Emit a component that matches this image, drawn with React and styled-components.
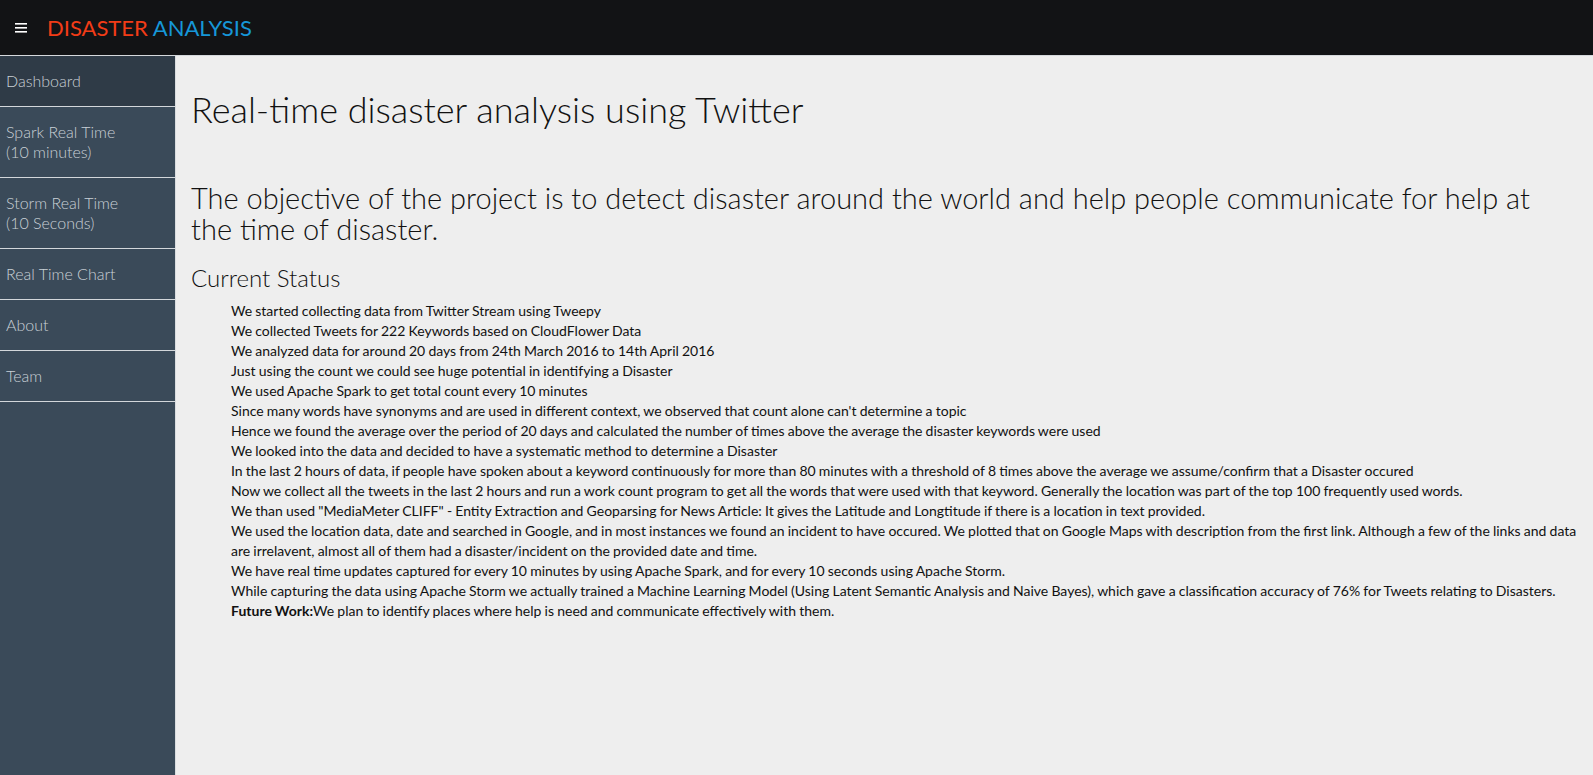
import styled, { createGlobalStyle } from "styled-components";

const GlobalStyle = createGlobalStyle`
  html, body {
    margin: 0;
    padding: 0;
    height: 100%;
  }
  body {
    font-family: Lato, "Open Sans", sans-serif;
    background: #eeeeee;
    color: #111;
  }
  #root {
    min-height: 100%;
  }
`;

const menuItems = [
  { label: "Dashboard", active: true },
  { label: ["Spark Real Time", "(10 minutes)"] },
  { label: ["Storm Real Time", "(10 Seconds)"] },
  { label: "Real Time Chart" },
  { label: "About" },
  { label: "Team" }
];

const statusLines = [
  "We started collecting data from Twitter Stream using Tweepy",
  "We collected Tweets for 222 Keywords based on CloudFlower Data",
  "We analyzed data for around 20 days from 24th March 2016 to 14th April 2016",
  "Just using the count we could see huge potential in identifying a Disaster",
  "We used Apache Spark to get total count every 10 minutes",
  "Since many words have synonyms and are used in different context, we observed that count alone can't determine a topic",
  "Hence we found the average over the period of 20 days and calculated the number of times above the average the disaster keywords were used",
  "We looked into the data and decided to have a systematic method to determine a Disaster",
  "In the last 2 hours of data, if people have spoken about a keyword continuously for more than 80 minutes with a threshold of 8 times above the average we assume/confirm that a Disaster occured",
  "Now we collect all the tweets in the last 2 hours and run a work count program to get all the words that were used with that keyword. Generally the location was part of the top 100 frequently used words.",
  "We than used \"MediaMeter CLIFF\" - Entity Extraction and Geoparsing for News Article: It gives the Latitude and Longtitude if there is a location in text provided.",
  "We used the location data, date and searched in Google, and in most instances we found an incident to have occured. We plotted that on Google Maps with description from the first link. Although a few of the links and data are irrelavent, almost all of them had a disaster/incident on the provided date and time.",
  "We have real time updates captured for every 10 minutes by using Apache Spark, and for every 10 seconds using Apache Storm.",
  "While capturing the data using Apache Storm we actually trained a Machine Learning Model (Using Latent Semantic Analysis and Naive Bayes), which gave a classification accuracy of 76% for Tweets relating to Disasters."
];

function App() {
  return (
    <Page>
      <GlobalStyle />
      <TopBar>
        <MenuButton>
          <svg width="12" height="10" viewBox="0 0 12 10">
            <rect x="0" y="0" width="12" height="1.6" fill="#fff" />
            <rect x="0" y="4" width="12" height="1.6" fill="#fff" />
            <rect x="0" y="8" width="12" height="1.6" fill="#fff" />
          </svg>
        </MenuButton>
        <Brand>
          <BrandWord $color="#f23c17">DISASTER</BrandWord>{" "}
          <BrandWord $color="#1697d8">ANALYSIS</BrandWord>
        </Brand>
      </TopBar>
      <Body>
        <Sidebar>
          {menuItems.map((item, i) => (
            <NavItem key={i} $active={item.active}>
              {Array.isArray(item.label) ? (
                <>
                  {item.label[0]}
                  <br />
                  {item.label[1]}
                </>
              ) : (
                item.label
              )}
            </NavItem>
          ))}
        </Sidebar>
        <Main>
          <Title>Real-time disaster analysis using Twitter</Title>
          <Objective>
            The objective of the project is to detect disaster around the world and help
            people communicate for help at the time of disaster.
          </Objective>
          <SectionTitle>Current Status</SectionTitle>
          <StatusList>
            {statusLines.map((line, i) => (
              <li key={i}>{line}</li>
            ))}
            <li>
              <b>Future Work:</b>We plan to identify places where help is need and communicate
              effectively with them.
            </li>
          </StatusList>
        </Main>
      </Body>
    </Page>
  );
}

export default App;

const Page = styled.div`
  display: flex;
  flex-direction: column;
  min-height: 100vh;
`;

const TopBar = styled.header`
  display: flex;
  align-items: center;
  height: 55px;
  background: #121315;
  border-bottom: 1px solid #d5d8dc;
  padding-left: 15px;
`;

const MenuButton = styled.div`
  display: flex;
  align-items: center;
  width: 12px;
  height: 10px;
  margin-right: 20px;
  margin-top: 1px;
`;

const Brand = styled.div`
  font-family: Lato, sans-serif;
  font-size: 22px;
`;

const BrandWord = styled.span`
  color: ${(p) => p.$color};
`;

const Body = styled.div`
  display: flex;
  flex: 1;
`;

const Sidebar = styled.nav`
  width: 175px;
  flex-shrink: 0;
  background: #3a4a59;
  border-right: 1px solid #d9dcdf;
`;

const NavItem = styled.div`
  padding: 15px 6px;
  font-size: 16px;
  line-height: 20px;
  color: #c9d0d6;
  font-weight: 300;
  background: ${(p) => (p.$active ? "#2f3b47" : "transparent")};
  border-bottom: 1px solid #d3d7db;
`;

const Main = styled.main`
  flex: 1;
  padding: 0 15px;
  background: #eeeeee;
`;

const Title = styled.h1`
  margin: 34px 0 0;
  font-size: 36px;
  font-weight: 300;
  line-height: 1.1;
  color: #111;
`;

const Objective = styled.h2`
  margin: 52px 0 0;
  padding-right: 20px;
  font-size: 29px;
  font-weight: 300;
  line-height: 31px;
  color: #111;
`;

const SectionTitle = styled.h3`
  margin: 21px 0 0;
  font-size: 24px;
  font-weight: 300;
  line-height: 1.1;
  color: #111;
`;

const StatusList = styled.ul`
  margin: 10px 0 0;
  padding-left: 40px;
  list-style: none;
  font-size: 14px;
  line-height: 20px;
  word-spacing: -0.4px;
  color: #111;

  b {
    font-weight: 700;
  }
`;
